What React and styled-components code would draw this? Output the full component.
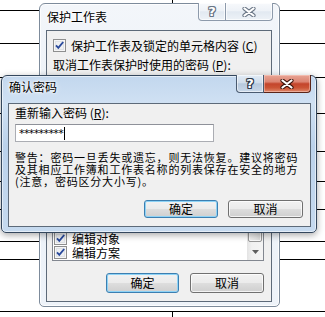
import React from 'react';
import styled, { createGlobalStyle, css } from 'styled-components';

const Global = createGlobalStyle`
  html, body { margin: 0; padding: 0; background: #fff; }
  body {
    width: 325px; height: 317px; overflow: hidden;
    font-family: "Noto Sans CJK SC", "Noto Sans", "DejaVu Sans", sans-serif;
    font-size: 12px; color: #000;
  }
`;

const Desktop = styled.div`
  position: relative;
  width: 325px;
  height: 317px;
  overflow: hidden;
  background: #fff;
`;

/* ---------- spreadsheet grid behind the dialogs ---------- */
const Sheet = styled.div`
  display: flex;
  flex-direction: column;
  height: 100%;
`;
const GridRow = styled.div`
  display: flex;
  flex-shrink: 0;
  height: ${p => p.$h}px;
  border-bottom: ${p => (p.$last ? 'none' : '1px solid #000')};
  ${p => p.$last && css`flex: 1;`}
`;
const GridCell = styled.div`
  width: 172px;
  border-right: 1px solid #000;
`;

/* ---------- window frame ---------- */
const Window = styled.div`
  position: absolute;
  left: ${p => p.$x}px;
  top: ${p => p.$y}px;
  width: ${p => p.$w}px;
  height: ${p => p.$h}px;
  box-sizing: border-box;
  display: flex;
  flex-direction: column;
  border-radius: 6px 6px 5px 5px;
  ${p => p.$active ? css`
    border: 1px solid #34475d;
    background: linear-gradient(180deg, #c2d7ee 0%, #d0e1f3 18%, #bbd2eb 45%, #c6daef 100%);
    box-shadow: inset 0 0 0 1px rgba(255,255,255,0.55), 0 2px 7px rgba(0,0,0,0.35);
  ` : css`
    border: 1px solid #7d8b9b;
    background: linear-gradient(180deg, #f3f6fa 0%, #eaf0f7 40%, #eef3f9 100%);
    box-shadow: inset 0 0 0 1px rgba(255,255,255,0.8);
  `}
`;

const TitleBar = styled.div`
  display: flex;
  align-items: flex-start;
  justify-content: space-between;
  height: ${p => p.$h}px;
  flex-shrink: 0;
  padding-left: 7px;
  padding-right: ${p => p.$pr}px;
`;

const TitleText = styled.div`
  padding-top: ${p => p.$pt}px;
  line-height: 14px;
  font-size: 12px;
  color: #000;
  text-shadow: 0 0 6px #fff, 0 0 3px #fff, 0 0 2px #fff;
`;

const CaptionGroup = styled.div`
  display: flex;
  margin-top: -1px;
`;

const CaptionBtn = styled.div`
  box-sizing: border-box;
  height: 18px;
  width: ${p => p.$w}px;
  display: flex;
  align-items: center;
  justify-content: center;
  border: 1px solid ${p => (p.$active ? '#4a5b70' : '#8d9aab')};
  border-top: none;
  ${p => p.$close && css`border-left: none;`}
  border-radius: ${p => (p.$close ? '0 0 4px 0' : '0 0 0 4px')};
  ${p => p.$close && p.$active ? css`
    border-color: #5a2418;
    background: linear-gradient(180deg, #e8a595 0%, #dc8573 40%, #c4452c 52%, #cb5436 75%, #e0896c 100%);
    box-shadow: inset 0 0 0 1px rgba(255,220,210,0.45);
  ` : p.$active ? css`
    background: linear-gradient(180deg, #e2ebf5 0%, #d0ddeb 45%, #b7c9dd 52%, #c9d8e9 100%);
    box-shadow: inset 0 0 0 1px rgba(255,255,255,0.55);
  ` : css`
    background: linear-gradient(180deg, #f7f9fc 0%, #eef2f7 45%, #e2e9f1 52%, #edf2f7 100%);
    box-shadow: inset 0 0 0 1px rgba(255,255,255,0.7);
  `}
`;

const HelpGlyph = styled.span`
  font-family: "DejaVu Sans", sans-serif;
  font-weight: bold;
  font-size: 13px;
  line-height: 13px;
  color: #fff;
  text-shadow: ${p => {
    const c = p.$active ? '#2e3a4a' : '#6a7686';
    return `1px 0 ${c}, -1px 0 ${c}, 0 1px ${c}, 0 -1px ${c}, 1px 1px ${c}, -1px -1px ${c}, 1px -1px ${c}, -1px 1px ${c}`;
  }};
`;

const CloseGlyph = ({ active }) => (
  <svg width="14" height="10" viewBox="0 0 14 10">
    <path d="M2.5 1.5 L11.5 8.5 M11.5 1.5 L2.5 8.5" stroke={active ? '#3d140c' : '#6a7686'} strokeWidth="4.2" strokeLinecap="round" fill="none" />
    <path d="M2.5 1.5 L11.5 8.5 M11.5 1.5 L2.5 8.5" stroke="#fff" strokeWidth="2.2" strokeLinecap="round" fill="none" />
  </svg>
);

const Client = styled.div`
  box-sizing: border-box;
  flex: 1;
  display: flex;
  flex-direction: column;
  margin: 0 ${p => p.$mr}px ${p => p.$mb}px ${p => p.$ml}px;
  border: 1px solid #5d6a79;
  background: #f0f0f0;
  padding: ${p => p.$pad};
`;

/* ---------- controls ---------- */
const Label = styled.div`
  line-height: ${p => p.$lh || 13}px;
  height: ${p => p.$lh || 13}px;
  margin-top: ${p => p.$mt || 0}px;
  white-space: nowrap;
`;

const CheckRow = styled.div`
  display: flex;
  align-items: center;
  gap: 5px;
  height: 13px;
  line-height: 13px;
  margin-top: ${p => p.$mt || 0}px;
  white-space: nowrap;
`;

const CheckBox = ({ checked }) => (
  <svg width="13" height="13" viewBox="0 0 13 13" style={{ flexShrink: 0 }}>
    <rect x="0.5" y="0.5" width="12" height="12" fill="#f6f6f6" stroke="#8e8f8f" />
    <rect x="2" y="2" width="9" height="9" fill="#dfe2e6" />
    <rect x="3" y="3" width="7" height="7" fill="#eef0f2" />
    {checked && (
      <path d="M3 6.3 L5.3 8.8 L10.2 3" stroke="#2a4a9c" strokeWidth="1.9" fill="none" />
    )}
  </svg>
);

const TextInput = styled.div`
  box-sizing: border-box;
  width: ${p => p.$w}px;
  height: 18px;
  margin-top: ${p => p.$mt || 0}px;
  border: 1px solid #abadb3;
  border-top-color: #8e9199;
  background: #fff;
  display: flex;
  align-items: center;
  padding-left: 3px;
  font-family: "DejaVu Sans", sans-serif;
  font-size: 11px;
  letter-spacing: -0.6px;
`;

const Caret = styled.span`
  display: inline-block;
  width: 1px;
  height: 13px;
  background: #000;
  margin-left: 1px;
`;

const Warning = styled.p`
  margin: ${p => p.$mt || 0}px 0 0 0;
  width: 286px;
  height: 36px;
  font-size: 11px;
  line-height: 12px;
  letter-spacing: 0.8px;
  word-break: break-all;
`;

const ButtonRow = styled.div`
  display: flex;
  justify-content: flex-end;
  gap: ${p => p.$gap}px;
  margin-top: ${p => p.$mt || 0}px;
  flex-shrink: 0;
`;

const Button = styled.div`
  box-sizing: border-box;
  width: ${p => p.$w}px;
  height: ${p => p.$h}px;
  display: flex;
  align-items: center;
  justify-content: center;
  border-radius: 3px;
  border: 1px solid ${p => (p.$default ? '#3c7fb1' : '#707070')};
  background: linear-gradient(180deg, #f2f2f2 0%, #ebebeb 48%, #dddddd 52%, #cfcfcf 100%);
  box-shadow: inset 0 0 0 1px ${p => (p.$default ? '#8ed3f6' : 'rgba(255,255,255,0.75)')};
  font-size: 12px;
  line-height: 12px;
`;

/* list box */
const ListBox = styled.div`
  flex: 1;
  min-height: 0;
  display: flex;
  margin-top: ${p => p.$mt || 0}px;
  margin-left: -1px;
  border: 1px solid #828790;
  background: #fff;
`;
const ListItems = styled.div`
  flex: 1;
  overflow: hidden;
  display: flex;
  flex-direction: column;
  justify-content: flex-end;
  gap: 1px;
  padding: 0 0 1px 1px;
`;
const ScrollBar = styled.div`
  width: 16px;
  display: flex;
  flex-direction: column;
  background: linear-gradient(90deg, #e3e3e3 0%, #f1f1f1 30%, #f4f4f4 100%);
`;
const ScrollTrack = styled.div`
  flex: 1;
  display: flex;
  flex-direction: column;
  justify-content: flex-end;
`;
const ScrollThumb = styled.div`
  box-sizing: border-box;
  height: 60px;
  margin: 0 1px 1px 1px;
  border: 1px solid #979797;
  border-radius: 2px;
  background: linear-gradient(90deg, #f2f2f2 0%, #e8e8e8 50%, #dadada 100%);
  box-shadow: inset 0 0 0 1px rgba(255,255,255,0.8);
`;
const ScrollArrow = styled.div`
  height: 17px;
  display: flex;
  align-items: center;
  justify-content: center;
`;

const DownTri = () => (
  <svg width="7" height="4" viewBox="0 0 7 4">
    <path d="M0 0 L7 0 L3.5 4 Z" fill="#5e5e5e" />
  </svg>
);

const LINES = [10, 43, 77, 113, 151, 181, 209, 241, 259, 311];

const listItems = [
  ['插入超链接', false],
  ['删除列', false],
  ['删除行', false],
  ['排序', false],
  ['使用自动筛选', false],
  ['使用数据透视表', false],
  ['编辑对象', true],
  ['编辑方案', true],
];

export default function App() {
  return (
    <>
      <Global />
      <Desktop>
        <Sheet>
          {LINES.map((y, i) => (
            <GridRow key={y} $h={y - (i === 0 ? 0 : LINES[i - 1] + 1)}>
              {i === 0 && <GridCell />}
            </GridRow>
          ))}
          <GridRow $last $h={5}>
            <GridCell />
          </GridRow>
        </Sheet>

        {/* Back dialog: 保护工作表 */}
        <Window $x={39} $y={3} $w={241} $h={304}>
          <TitleBar $h={26} $pr={6}>
            <TitleText $pt={6}>保护工作表</TitleText>
            <CaptionGroup>
              <CaptionBtn $w={28}><HelpGlyph>?</HelpGlyph></CaptionBtn>
              <CaptionBtn $w={47} $close><CloseGlyph /></CaptionBtn>
            </CaptionGroup>
          </TitleBar>
          <Client $ml={6} $mr={7} $mb={4} $pad="8px 7px 8px 6px">
            <CheckRow>
              <CheckBox checked />
              <span>保护工作表及锁定的单元格内容 (<u>C</u>)</span>
            </CheckRow>
            <Label $mt={6}>取消工作表保护时使用的密码 (<u>P</u>):</Label>
            <TextInput $w={211} $mt={4} />
            <Label $mt={8}>允许此工作表的所有用户进行 (<u>O</u>):</Label>
            <ListBox $mt={4}>
              <ListItems>
                {listItems.map(([t, c]) => (
                  <CheckRow key={t}>
                    <CheckBox checked={c} />
                    <span>{t}</span>
                  </CheckRow>
                ))}
              </ListItems>
              <ScrollBar>
                <ScrollTrack><ScrollThumb /></ScrollTrack>
                <ScrollArrow><DownTri /></ScrollArrow>
              </ScrollBar>
            </ListBox>
            <ButtonRow $gap={11} $mt={12}>
              <Button $w={73} $h={20} $default>确定</Button>
              <Button $w={74} $h={20}>取消</Button>
            </ButtonRow>
          </Client>
        </Window>

        {/* Front dialog: 确认密码 */}
        <Window $active $x={1} $y={75} $w={316} $h={158}>
          <TitleBar $h={27} $pr={5}>
            <TitleText $pt={4}>确认密码</TitleText>
            <CaptionGroup>
              <CaptionBtn $active $w={28}><HelpGlyph $active>?</HelpGlyph></CaptionBtn>
              <CaptionBtn $active $close $w={47}><CloseGlyph active /></CaptionBtn>
            </CaptionGroup>
          </TitleBar>
          <Client $ml={6} $mr={5} $mb={6} $pad="2px 7px 8px 6px">
            <Label $lh={14}>重新输入密码 (<u>R</u>):</Label>
            <TextInput $w={199} $mt={4}>*********<Caret /></TextInput>
            <Warning $mt={9}>警告：密码一旦丢失或遗忘，则无法恢复。建议将密码及其相应工作簿和工作表名称的列表保存在安全的地方(注意，密码区分大小写)。</Warning>
            <ButtonRow $gap={10} $mt={13}>
              <Button $w={74} $h={18} $default>确定</Button>
              <Button $w={75} $h={18}>取消</Button>
            </ButtonRow>
          </Client>
        </Window>
      </Desktop>
    </>
  );
}
